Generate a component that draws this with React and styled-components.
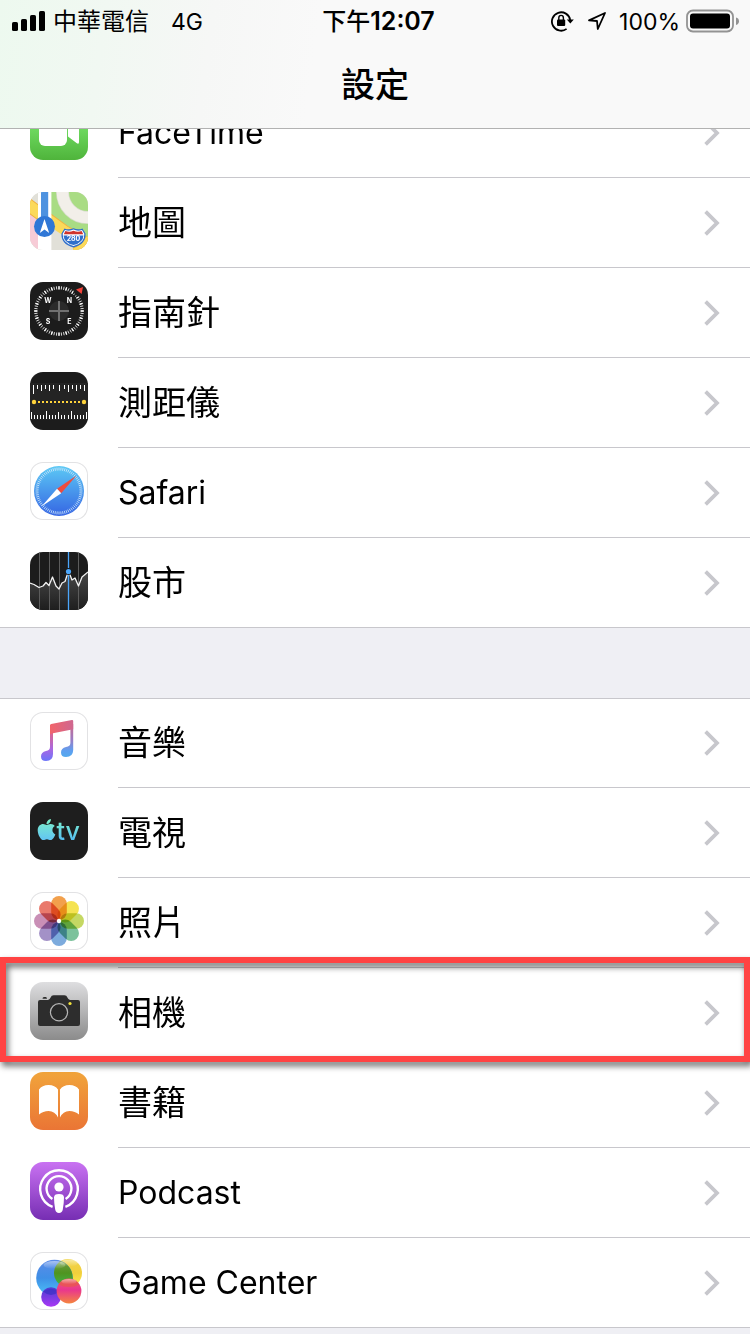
import React from 'react';
import styled, { createGlobalStyle, css } from 'styled-components';
import { FaApple } from 'react-icons/fa';

const GlobalStyle = createGlobalStyle`
  * {
    box-sizing: border-box;
  }

  body {
    margin: 0;
    background: #efeff4;
    color: #000;
    font-family: Inter, "Noto Sans CJK TC", sans-serif;
  }
`;

const Page = styled.div`
  height: 100vh;
  overflow: hidden;
  background: #efeff4;
`;

// Header
const Header = styled.header`
  position: sticky;
  top: 0;
  z-index: 2;
  margin-bottom: -41px;
  border-bottom: 1px solid #b2b2b2;
  background: linear-gradient(98deg, #edf9ef 0%, #f1f8f2 14%, #f6f7f6 28%, #f9f9f9 42%);
`;

const StatusBar = styled.div`
  display: grid;
  grid-template-columns: 1fr auto 1fr;
  align-items: center;
  height: 40px;
  padding: 0 11px 0 12px;
  font-size: 24px;
  line-height: 38px;
`;

const StatusGroup = styled.div`
  display: flex;
  align-items: center;
  justify-content: ${(props) => (props.$end ? 'flex-end' : 'flex-start')};
  gap: ${(props) => (props.$end ? '6px' : '8px')};
`;

const StatusText = styled.span`
  padding-top: 2px;
`;

const Network = styled(StatusText)`
  margin-left: 14px;
  font-size: 23px;
`;

const Percent = styled(StatusText)`
  margin-left: 6px;
  font-size: 23px;
`;

const LockSlot = styled.span`
  display: flex;
  margin-right: 7px;
`;

const Clock = styled.time`
  padding: 2px 0 0 6px;
  font-size: 25px;
  font-weight: 600;
`;

const Meridiem = styled.span`
  font-size: 24px;
  font-weight: 500;
`;

const Title = styled.h1`
  margin: 0;
  height: 88px;
  font-size: 34px;
  font-weight: 500;
  line-height: 90px;
  text-align: center;
`;

// Lists
const Group = styled.ul`
  margin: 0 0 70px;
  padding: 0;
  list-style: none;
  background: #fff;
  box-shadow: inset 0 1px 0 #c8c7cc, inset 0 -1px 0 #c8c7cc;
`;

const Label = styled.span`
  display: flex;
  flex: 1;
  align-items: center;
  justify-content: space-between;
  padding-right: 30px;
  border-bottom: 1px solid #c8c7cc;
  font-size: ${(props) => (props.$latin ? '32px' : '34px')};
  line-height: 48px;
`;

const Item = styled.li`
  position: relative;

  &:last-child ${Label} {
    border-bottom-color: transparent;
  }

  ${(props) =>
    props.$marked &&
    css`
      &::after {
        content: '';
        position: absolute;
        z-index: 1;
        top: -11px;
        right: 0;
        bottom: -4px;
        left: 0;
        border: 6px solid #ff4343;
        filter: drop-shadow(2px 4px 3px rgba(0, 0, 0, 0.6));
        pointer-events: none;
      }
    `}
`;

const RowLink = styled.a`
  display: flex;
  min-height: 90px;
  color: inherit;
  text-decoration: none;
`;

const Tile = styled.span`
  flex: none;
  width: 58px;
  height: 58px;
  margin: 14px 30px 18px;
  border-radius: 13px;
  overflow: hidden;
  background: ${(props) => props.$bg || '#fff'};
  box-shadow: ${(props) => (props.$bg ? 'none' : 'inset 0 0 0 1px #e2e2e4')};

  svg {
    display: block;
  }
`;

const Chevron = () => (
  <svg width="16" height="26" viewBox="0 0 16 26" fill="none" aria-hidden="true">
    <path d="M1.6 1.6 L13 13 L1.6 24.4" stroke="#c7c7cc" strokeWidth="3.8" />
  </svg>
);

const Art = ({ children }) => (
  <svg width="58" height="58" viewBox="0 0 58 58" aria-hidden="true">
    {children}
  </svg>
);

const ticks = (count, r1, r2) =>
  Array.from({ length: count }, (_, i) => {
    const a = (i * 2 * Math.PI) / count;
    const x = Math.cos(a);
    const y = Math.sin(a);
    return `M${29 + x * r1} ${29 + y * r1}L${29 + x * r2} ${29 + y * r2}`;
  }).join('');

const FaceTimeArt = () => (
  <Art>
    <rect x="9" y="16" width="28" height="28" rx="6" fill="#fff" />
    <path d="M38 25 L47 17.5 Q49 16.5 49 19 V40 Q49 43 46.5 41 L38 34.5 Z" fill="#fff" />
  </Art>
);

const MapsArt = () => (
  <Art>
    <rect width="58" height="58" fill="#e1e0d8" />
    <path d="M20 0 H58 V48 L20 22 Z" fill="#a9dc84" />
    <circle cx="58" cy="0" r="25.5" fill="none" stroke="#d6dccb" strokeWidth="13" />
    <circle cx="58" cy="0" r="25.5" fill="none" stroke="#f2efe9" strokeWidth="11.6" />
    <path d="M0 22 L9 29 V58 H0 Z" fill="#f7cbd6" />
    <path d="M0 50 L8 58 H0 Z" fill="#e1e0d8" />
    <path d="M-3 12 L9 21 L34 39 Q46 46 60 55" fill="none" stroke="#eeb23f" strokeWidth="13" />
    <path d="M-3 12 L9 21 L34 39 Q46 46 60 55" fill="none" stroke="#fbd95a" strokeWidth="11" />
    <path d="M22 36 L58 60 H22 Z" fill="#e1e0d8" />
    <path d="M44 60 Q54 57 60 46" fill="none" stroke="#eeb23f" strokeWidth="9" />
    <path d="M44 60 Q54 57 60 46" fill="none" stroke="#fbd95a" strokeWidth="7.4" />
    <rect x="8" width="13.4" height="58" fill="#fff" />
    <rect x="11" width="7.2" height="34" fill="#4d92e0" />
    <circle cx="14.5" cy="34.5" r="10.5" fill="#2f77d6" />
    <path d="M14.5 27 L19.2 41 L14.5 37.4 L9.8 41 Z" fill="#fff" />
    <path
      d="M34.5 36.5 Q39 38.3 43.5 36.3 Q48 38.3 52.5 36.5 L55.5 41.5 Q56.4 52 43.5 55.5 Q30.6 52 31.5 41.5 Z"
      fill="#2f6fcb"
    />
    <path
      d="M35 38 Q39.5 39.5 43.5 37.6 Q47.5 39.5 52 38 L54.3 41.7 Q55 51 43.5 54 Q32 51 32.7 41.7 Z"
      fill="#fff"
    />
    <path d="M35.4 39 Q39.5 40.4 43.5 38.8 Q47.5 40.4 51.6 39 L53.2 42.2 H33.8 Z" fill="#d0342c" />
    <path d="M33.6 43.4 H53.4 Q53.3 50.5 43.5 53 Q33.7 50.5 33.6 43.4 Z" fill="#2f6fcb" />
    <text x="43.5" y="49.4" fontSize="7" fontWeight="700" textAnchor="middle" fill="#fff">
      280
    </text>
  </Art>
);

const CompassArt = () => (
  <Art>
    <path d={ticks(60, 21.6, 24.8)} stroke="#d8d8d8" strokeWidth="1" />
    <path d={ticks(20, 21.6, 24.8)} stroke="#fff" strokeWidth="1.3" />
    <path d="M43 10 L48 15 L54 8 L50 4 Z" fill="#1c1c1c" />
    <path d="M53 5 L51.6 12 L46 7.6 Z" fill="#f4433a" />
    <circle cx="29" cy="29" r="10" fill="#2b2b2b" />
    <path d="M29 19 V39 M19 29 H39" stroke="#717171" strokeWidth="2" />
    <g fill="#fff" fontSize="7" fontWeight="700" textAnchor="middle">
      <text x="18" y="21">W</text>
      <text x="39.5" y="21">N</text>
      <text x="18" y="42">S</text>
      <text x="39.5" y="42">E</text>
    </g>
  </Art>
);

const MeasureArt = () => (
  <Art>
    <rect y="11" width="58" height="37" fill="#242424" />
    <path
      d="M3.5 13 V22 M7.5 13 V17 M11.5 13 V19 M15.5 13 V17 M19.5 13 V19 M23.5 13 V17 M29.5 13 V19 M34.5 13 V17 M38.5 13 V20 M42.5 13 V17 M46.5 13 V19 M50.5 13 V17 M54.5 13 V19"
      stroke="#fff"
    />
    <path
      d="M1.5 40 V47 M4.5 43 V47 M7.5 43 V47 M10.5 43 V47 M13.5 43 V47 M16.5 39 V47 M19.5 43 V47 M22.5 43 V47 M25.5 43 V47 M28.5 40 V47 M31.5 43 V47 M34.5 43 V47 M38.5 43 V47 M41.5 39 V47 M44.5 43 V47 M47.5 43 V47 M50.5 43 V47 M53.5 43 V47 M56.5 40 V47"
      stroke="#fff"
    />
    <path d="M8 30 H51" stroke="#ffd43b" strokeWidth="2" strokeDasharray="2 2" />
    <circle cx="4" cy="30" r="2.2" fill="#ffd43b" />
    <circle cx="54" cy="30" r="2.2" fill="#ffd43b" />
  </Art>
);

const SafariArt = () => (
  <Art>
    <defs>
      <linearGradient id="safari" x1="0" y1="0" x2="0" y2="1">
        <stop offset="0" stopColor="#5cc9f5" />
        <stop offset="1" stopColor="#3565e3" />
      </linearGradient>
    </defs>
    <circle cx="29" cy="29" r="25" fill="url(#safari)" />
    <path d={ticks(72, 20.5, 23.5)} stroke="#d5ecfb" strokeWidth="0.8" />
    <path d="M46.5 13.5 L27 26.8 L31.2 31.2 Z" fill="#ee4b3e" />
    <path d="M11.5 44.5 L27 26.8 L31.2 31.2 Z" fill="#fff" />
  </Art>
);

const StocksArt = () => (
  <Art>
    <defs>
      <linearGradient id="stocks" x1="0" y1="0" x2="0" y2="1">
        <stop offset="0" stopColor="#484848" />
        <stop offset="1" stopColor="#1e1e1e" />
      </linearGradient>
    </defs>
    <path
      d="M0 31 L4 32.5 L9 35.5 L13 34 L16 30.5 L19 33.5 L22.5 25 L26 34 L29 37 L32 31 L35 29.5 L38.5 19 L42 28 L45 26 L48.5 34 L52 25 L58 20 V58 H0 Z"
      fill="url(#stocks)"
    />
    <path d="M9.5 0 V58 M19.5 0 V58 M29.5 0 V58 M48.5 0 V58" stroke="#5c5c5c" />
    <path
      d="M0 31 L4 32.5 L9 35.5 L13 34 L16 30.5 L19 33.5 L22.5 25 L26 34 L29 37 L32 31 L35 29.5 L38.5 19 L42 28 L45 26 L48.5 34 L52 25 L58 20"
      fill="none"
      stroke="#f2f2f2"
      strokeWidth="1.3"
      strokeLinejoin="round"
    />
    <path d="M38.5 0 V58" stroke="#4ba6fa" strokeWidth="1.3" />
    <circle cx="38.5" cy="19.5" r="3.6" fill="#1c1c1c" />
    <circle cx="38.5" cy="19.5" r="2.6" fill="#4ba6fa" />
  </Art>
);

const MusicArt = () => (
  <Art>
    <defs>
      <linearGradient id="note-left" gradientUnits="userSpaceOnUse" x1="0" y1="14" x2="0" y2="48">
        <stop offset="0" stopColor="#f2646a" />
        <stop offset="0.7" stopColor="#a668e4" />
        <stop offset="1" stopColor="#6f74f8" />
      </linearGradient>
      <linearGradient id="note-right" gradientUnits="userSpaceOnUse" x1="0" y1="8" x2="0" y2="44">
        <stop offset="0" stopColor="#d8667f" />
        <stop offset="0.55" stopColor="#9a7cc4" />
        <stop offset="0.85" stopColor="#5f9ff0" />
        <stop offset="1" stopColor="#55a8ee" />
      </linearGradient>
      <linearGradient id="note-beam" x1="0" y1="0" x2="1" y2="0">
        <stop offset="0" stopColor="#f2646a" />
        <stop offset="1" stopColor="#cf6790" />
      </linearGradient>
    </defs>
    <path
      d="M20 18 H23 V42 Q23 49 16 49 Q11 49 11 44.5 Q11 40 16 39 Q20 38.5 20 35 Z"
      fill="url(#note-left)"
    />
    <path
      d="M40.4 12 H43.2 V38 Q43 45 36 45 Q31 45 31 40.5 Q31 36 36 35 Q40.4 34.5 40.4 31 Z"
      fill="url(#note-right)"
    />
    <path
      d="M20 13.5 Q20 12.3 21.2 12 L41.8 8 Q43.2 7.8 43.2 9 V17.2 L23 21.2 L20 22 Z"
      fill="url(#note-beam)"
    />
  </Art>
);

const TvArt = () => (
  <Art>
    <defs>
      <linearGradient id="tv" gradientUnits="userSpaceOnUse" x1="0" y1="18" x2="0" y2="38">
        <stop offset="0" stopColor="#7cf0cf" />
        <stop offset="1" stopColor="#55bdf0" />
      </linearGradient>
      <linearGradient id="tv-apple" x1="0" y1="0" x2="0" y2="1">
        <stop offset="0" stopColor="#7cf0c8" />
        <stop offset="1" stopColor="#62c4f3" />
      </linearGradient>
    </defs>
    <FaApple x="4.5" y="15.5" size={24} fill="url(#tv-apple)" />
    <text x="26.4" y="37.5" fontSize="25" fontWeight="500" fill="url(#tv)">
      tv
    </text>
  </Art>
);

const petals = ['#f2a04c', '#f5e352', '#c5d863', '#7cc29c', '#7cabdd', '#a391c7', '#c98fb6', '#e9796c'];

const PhotosArt = () => (
  <Art>
    <g style={{ isolation: 'isolate' }}>
      {petals.map((color, i) => (
        <rect
          key={color}
          x="21.2"
          y="4"
          width="15.6"
          height="24"
          rx="7.8"
          fill={color}
          transform={`rotate(${i * 45} 29 29)`}
          style={{ mixBlendMode: 'multiply' }}
        />
      ))}
    </g>
    <circle cx="29" cy="29" r="2.2" fill="#fff" />
  </Art>
);

const CameraArt = () => (
  <Art>
    <path
      d="M10 18 H18 Q20 17.6 20.6 15.6 Q21.4 13.2 23.6 13.2 H34.4 Q36.6 13.2 37.4 15.6 Q38 17.6 40 18 H48 Q50 18 50 20 V42 Q50 44 48 44 H10 Q8 44 8 42 V20 Q8 18 10 18 Z"
      fill="#2d2d2d"
    />
    <path d="M12.5 16.8 Q12.5 15 14 15 H15.6 Q17 15 17 16.8 Z" fill="#2d2d2d" />
    <circle cx="29" cy="30.3" r="8.6" fill="#282828" stroke="#b5b5b5" strokeWidth="1.2" />
    <circle cx="40" cy="21.5" r="1.6" fill="#f2e33c" />
  </Art>
);

const BooksArt = () => (
  <Art>
    <path
      d="M9 17.6 Q12 13 18.6 13 Q25 13 28 17.6 V45.6 Q25 39 18.6 39 Q13 39 9 42.6 Z M49 17.6 Q46 13 39.4 13 Q33 13 30 17.6 V45.6 Q33 39 39.4 39 Q45 39 49 42.6 Z"
      fill="#fff"
    />
  </Art>
);

const PodcastArt = () => (
  <Art>
    <g fill="none" stroke="#fff" strokeWidth="2.4">
      <path d="M22.6 44.8 A18.8 18.8 0 1 1 35.4 44.8" />
      <path d="M22.4 37 A12.4 12.4 0 1 1 35.6 37" />
    </g>
    <circle cx="29" cy="25" r="4.6" fill="#fff" />
    <path
      d="M24 35.4 Q24 32 29 32 Q34 32 34 35.4 Q34 41 32.8 47.6 Q32.2 51 29 51 Q25.8 51 25.2 47.6 Q24 41 24 35.4 Z"
      fill="#fff"
    />
  </Art>
);

const GameCenterArt = () => (
  <Art>
    <defs>
      <linearGradient id="gc-blue" x1="0" y1="0" x2="0" y2="1">
        <stop offset="0" stopColor="#5c8ce8" />
        <stop offset="0.5" stopColor="#3f8fe6" />
        <stop offset="1" stopColor="#4cc6fa" />
      </linearGradient>
      <linearGradient id="gc-yellow" x1="0" y1="0" x2="0" y2="1">
        <stop offset="0" stopColor="#f0d44c" />
        <stop offset="0.5" stopColor="#f2cf3c" />
        <stop offset="1" stopColor="#fdf04e" />
      </linearGradient>
      <linearGradient id="gc-green" x1="0" y1="0" x2="0" y2="1">
        <stop offset="0.1" stopColor="#6f9c3e" />
        <stop offset="0.5" stopColor="#4f9420" />
        <stop offset="1" stopColor="#3fb84a" />
      </linearGradient>
      <linearGradient id="gc-pink" x1="0" y1="0" x2="0" y2="1">
        <stop offset="0" stopColor="#ee5d6e" />
        <stop offset="0.45" stopColor="#e9368f" />
        <stop offset="1" stopColor="#f5853f" />
      </linearGradient>
      <linearGradient id="gc-purple" x1="0" y1="0" x2="0" y2="1">
        <stop offset="0" stopColor="#4a3fd0" />
        <stop offset="1" stopColor="#a838f5" />
      </linearGradient>
      <linearGradient id="gc-shine" x1="0" y1="0" x2="0" y2="1">
        <stop offset="0" stopColor="#fff" stopOpacity="0.5" />
        <stop offset="1" stopColor="#fff" stopOpacity="0" />
      </linearGradient>
      <clipPath id="gc-clip">
        <circle cx="24.5" cy="26" r="18.3" />
      </clipPath>
    </defs>
    <circle cx="38" cy="21" r="14" fill="url(#gc-yellow)" />
    <circle cx="24.5" cy="26" r="18.3" fill="url(#gc-blue)" />
    <circle cx="38" cy="21" r="14" fill="url(#gc-green)" clipPath="url(#gc-clip)" />
    <ellipse cx="24.5" cy="13" rx="11" ry="4" fill="url(#gc-shine)" />
    <ellipse cx="39" cy="11" rx="9" ry="3.4" fill="url(#gc-shine)" />
    <circle cx="21" cy="45" r="9.8" fill="url(#gc-purple)" />
    <path d="M13 39.5 Q21 34 29 39.5 Q21 46.5 13 39.5 Z" fill="#3c2fc4" opacity="0.7" />
    <circle cx="39" cy="39" r="12.4" fill="url(#gc-pink)" />
    <path d="M28.5 32.5 A12.4 12.4 0 0 1 49.5 32.5 Q39 37.5 28.5 32.5 Z" fill="#e8584a" opacity="0.7" />
    <ellipse cx="39" cy="29.6" rx="7.6" ry="2.6" fill="url(#gc-shine)" />
  </Art>
);

const DARK = '#1c1c1c';

const apps = [
  { name: 'FaceTime', art: FaceTimeArt, bg: 'linear-gradient(#86ef77, #6bd65c 50%, #4fb43b)', latin: true },
  { name: '地圖', art: MapsArt, bg: '#e1e0d8' },
  { name: '指南針', art: CompassArt, bg: DARK },
  { name: '測距儀', art: MeasureArt, bg: DARK },
  { name: 'Safari', art: SafariArt, latin: true },
  { name: '股市', art: StocksArt, bg: DARK },
];

const media = [
  { name: '音樂', art: MusicArt },
  { name: '電視', art: TvArt, bg: '#1e1e1e' },
  { name: '照片', art: PhotosArt },
  { name: '相機', art: CameraArt, bg: 'linear-gradient(#dedee0, #8b8b8b)', marked: true },
  { name: '書籍', art: BooksArt, bg: 'linear-gradient(#f1a43b, #ea7535)' },
  { name: 'Podcast', art: PodcastArt, bg: 'linear-gradient(#c972f2, #762eb3)', latin: true },
  { name: 'Game Center', art: GameCenterArt, latin: true },
];

const SettingsGroup = ({ items }) => (
  <Group>
    {items.map(({ name, art: Artwork, bg, marked, latin }) => (
      <Item key={name} $marked={marked}>
        <RowLink href="#">
          <Tile $bg={bg}>
            <Artwork />
          </Tile>
          <Label $latin={latin}>
            {name}
            <Chevron />
          </Label>
        </RowLink>
      </Item>
    ))}
  </Group>
);

const SignalIcon = () => (
  <svg width="33" height="20" viewBox="0 0 33 20" aria-hidden="true">
    <rect x="0" y="11" width="6" height="9" rx="1.6" />
    <rect x="9" y="8" width="6" height="12" rx="1.6" />
    <rect x="18" y="4" width="6" height="16" rx="1.6" />
    <rect x="27" y="0" width="6" height="20" rx="1.6" />
  </svg>
);

const RotationLockIcon = () => (
  <svg width="23" height="22" viewBox="0 0 23 22" aria-hidden="true">
    <path d="M15.6 18.9 A9.2 9.2 0 1 1 19.2 10" fill="none" stroke="#000" strokeWidth="1.8" />
    <path d="M15.8 9.6 H22.8 L19.3 13.6 Z" />
    <rect x="6" y="9.6" width="8.2" height="6.4" rx="1" />
    <path d="M7.8 10 V8 A2.3 2.6 0 0 1 12.4 8 V10" fill="none" stroke="#000" strokeWidth="1.4" />
  </svg>
);

const LocationIcon = () => (
  <svg width="20" height="20" viewBox="0 0 20 20" aria-hidden="true">
    <path
      d="M18 2 L10.8 18 L10 10 L2 9.4 Z"
      fill="none"
      stroke="#000"
      strokeWidth="1.8"
      strokeLinejoin="round"
    />
  </svg>
);

const BatteryIcon = () => (
  <svg width="53" height="24" viewBox="0 0 53 24" aria-hidden="true">
    <rect x="1" y="1.5" width="46" height="21" rx="6" fill="none" stroke="#939393" strokeWidth="1.8" />
    <rect x="4" y="4.5" width="40" height="15" rx="3" />
    <path d="M50 8.5 Q53 9.4 53 12.2 Q53 15 50 16 Z" fill="#939393" />
  </svg>
);

const App = () => {
  return (
    <>
      <GlobalStyle />
      <Page lang="zh-Hant">
        <Header>
          <StatusBar>
            <StatusGroup>
              <SignalIcon />
              <StatusText>中華電信</StatusText>
              <Network>4G</Network>
            </StatusGroup>
            <Clock>
              <Meridiem>下午</Meridiem>12:07
            </Clock>
            <StatusGroup $end>
              <LockSlot>
                <RotationLockIcon />
              </LockSlot>
              <LocationIcon />
              <Percent>100%</Percent>
              <BatteryIcon />
            </StatusGroup>
          </StatusBar>
          <Title>設定</Title>
        </Header>
        <main>
          <SettingsGroup items={apps} />
          <SettingsGroup items={media} />
        </main>
      </Page>
    </>
  );
};

export default App;
